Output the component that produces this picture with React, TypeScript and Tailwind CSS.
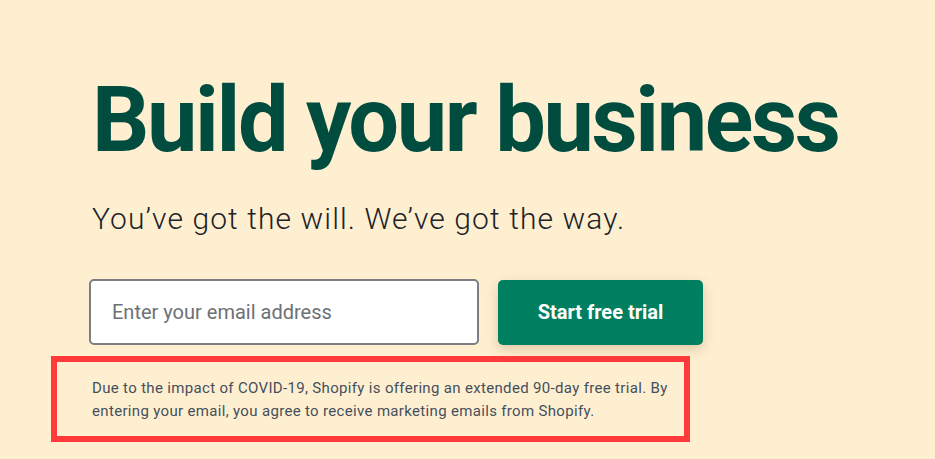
export default function App() {
  return (
    <div className="min-h-[459px] w-full bg-[#feefd1] font-['Roboto',sans-serif] overflow-hidden">
      <div className="pl-[92px] pt-[76px]">
        {/* 主標題 */}
        <h1 className="text-[90px] leading-none font-bold tracking-[-2.4px] text-[#004c3f]">
          Build your business
        </h1>
        <p className="mt-[35px] text-[30px] leading-[36px] font-light tracking-[1.1px] text-[#212326]">
          You’ve got the will. We’ve got the way.
        </p>

        {/* 電郵表單 */}
        <form className="mt-[42px] -ml-[3px] flex items-center gap-[19px]" onSubmit={(e) => e.preventDefault()}>
          <input
            type="email"
            placeholder="Enter your email address"
            className="w-[390px] h-[66px] rounded-[5px] border-2 border-[#7b7e82] bg-white px-[21px] text-[20px] text-[#212326] placeholder:text-[#6d7175] outline-none"
          />
          <button
            type="submit"
            className="w-[205px] h-[65px] rounded-[5px] bg-[#008060] text-white text-[20px] font-bold shadow-[0_4px_12px_rgba(120,90,30,0.25)]"
          >
            Start free trial
          </button>
        </form>
      </div>

      {/* 說明文字 */}
      <div className="ml-[51px] mt-[11px] w-[639px] h-[86px] border-[6px] border-[#ff3a3a] pl-[35px] pt-[15px]">
        <p className="whitespace-nowrap text-[15px] leading-[23px] tracking-[0.33px] text-[#454f5b]">
          Due to the impact of COVID-19, Shopify is offering an extended 90-day free trial. By<br />
          entering your email, you agree to receive marketing emails from Shopify.
        </p>
      </div>
    </div>
  )
}
